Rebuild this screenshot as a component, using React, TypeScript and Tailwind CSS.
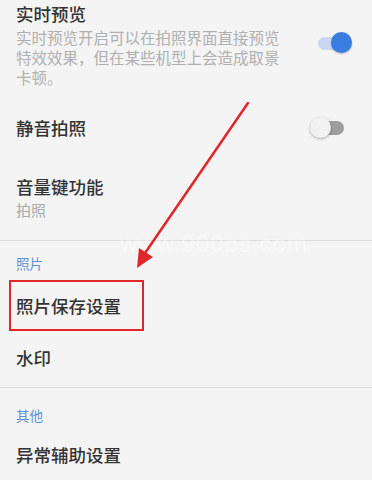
import React from "react";

function Toggle({ on }: { on: boolean }) {
  if (on) {
    return (
      <div className="relative h-[22px] w-[36px]">
        <div className="absolute left-[2px] top-[5px] h-[13px] w-[30px] rounded-full bg-[#c9d8f0]" />
        <div className="absolute right-0 top-0 h-[21px] w-[21px] rounded-full bg-[#3a7de0] shadow-[0_1px_2px_rgba(0,0,0,0.25)]" />
      </div>
    );
  }
  return (
    <div className="relative h-[22px] w-[36px]">
      <div className="absolute right-[2px] top-[4px] h-[14px] w-[30px] rounded-full bg-[#9d9d9d]" />
      <div className="absolute left-0 top-0 h-[21px] w-[21px] rounded-full bg-[#f1f1f1] shadow-[0_1px_3px_rgba(0,0,0,0.3)]" />
    </div>
  );
}

const font = "font-['Noto_Sans_CJK_SC','Noto_Sans',sans-serif]";

export default function App() {
  return (
    <div className={`relative h-[480px] w-[372px] overflow-hidden bg-[#f4f4f4] ${font}`}>
      {/* 实时预览 */}
      <div className="flex h-[100px] items-start justify-between pl-4 pr-[20px]">
        <div className="w-[270px]">
          <div className="mt-[2px] text-[17.5px] font-medium leading-[24px] text-[#333]">实时预览</div>
          <div className="mt-[1px] text-[15.5px] leading-[20px] text-[#b0b0b0]">
            实时预览开启可以在拍照界面直接预览特效效果，但在某些机型上会造成取景卡顿。
          </div>
        </div>
        <div className="mt-[32px]">
          <Toggle on />
        </div>
      </div>

      {/* 静音拍照 */}
      <div className="flex h-[56px] items-center justify-between pl-4 pr-[26px]">
        <div className="text-[17.5px] font-medium text-[#333]">静音拍照</div>
        <Toggle on={false} />
      </div>

      {/* 音量键功能 */}
      <div className="flex h-[84px] flex-col justify-center pl-4">
        <div className="text-[17.5px] font-medium leading-[24px] text-[#333]">音量键功能</div>
        <div className="text-[15px] leading-[22px] text-[#aaa]">拍照</div>
      </div>

      <div className="h-px bg-[#dcdcdc]" />

      {/* 照片 */}
      <div className="flex h-[42px] items-end pb-[11px] pl-4 text-[13.5px] leading-[18px] text-[#5b8fd6]">照片</div>
      <div className="flex h-[46px] items-center pl-4 text-[17.5px] font-medium text-[#333]">照片保存设置</div>
      <div className="flex h-[58px] items-center pl-4 text-[17.5px] font-medium text-[#333]">水印</div>

      <div className="h-px bg-[#dcdcdc]" />

      {/* 其他 */}
      <div className="flex h-[44px] items-end pb-[8px] pl-4 text-[13.5px] leading-[18px] text-[#5b8fd6]">其他</div>
      <div className="flex h-[46px] items-center pl-4 text-[17.5px] font-medium text-[#333]">异常辅助设置</div>

      {/* watermark */}
      <div className="pointer-events-none absolute left-[120px] top-[226px] font-['Liberation_Sans',sans-serif] text-[24px] tracking-[1px] text-white/40">
        www.900ps.com
      </div>

      {/* annotation box */}
      <div className="pointer-events-none absolute left-[9px] top-[280px] h-[51px] w-[135px] border-2 border-[#e0262a]" />

      {/* arrow */}
      <svg className="pointer-events-none absolute left-0 top-0" width="372" height="480" viewBox="0 0 372 480">
        <line x1="248" y1="103" x2="143" y2="256" stroke="#e0262a" strokeWidth="2.5" strokeLinecap="round" />
        <polygon points="137,268 139,248 153,257" fill="#e0262a" />
      </svg>
    </div>
  );
}
